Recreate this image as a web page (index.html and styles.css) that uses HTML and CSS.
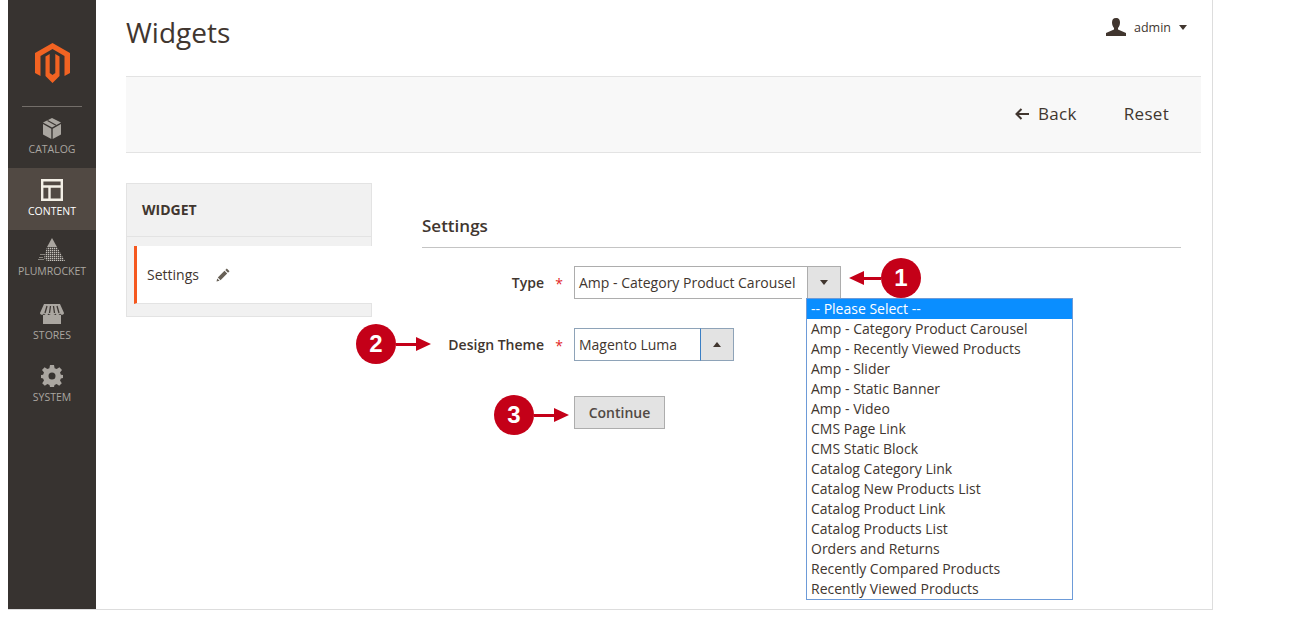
FILE: index.html
```html
<!DOCTYPE html>
<html lang="en">

<head>
    <meta charset="utf-8">
    <title>Widgets</title>
    <link rel="stylesheet" href="styles.css">
</head>

<body>
    <div class="frame">
        <!-- left menu -->
        <nav class="menu">
            <div class="logo">
                <svg width="35" height="40" viewBox="0 0 35 40">
                    <path fill="#f26322" d="M17.5 0L35 10V30L29.5 33V13L17.5 6 5.5 13V33L0 30V10Z" />
                    <path fill="#f26322" d="M14.7 11L10.5 13.5V33L17.5 40 24.5 33V13.5L20.3 11V30L17.5 32 14.7 30Z" />
                </svg>
            </div>
            <a class="menu-item catalog">
                <svg width="20" height="22" viewBox="0 0 20 22">
                    <path fill="#aaa6a0" d="M10 0L19 4.5 10 9.500 1 4.500Z" />
                    <path fill="#aaa6a0" d="M1 6L9.300 10.800V21L1 16.500Z" />
                    <path fill="#aaa6a0" d="M19 6L10.700 10.800V21L19 16.500Z" />
                    <path stroke="#3d3733" stroke-width="1.200" d="M5.500 2.500L14 7.200" />
                </svg>
                <span>Catalog</span>
            </a>
            <a class="menu-item active">
                <svg width="22" height="22" viewBox="0 0 22 22">
                    <path fill="none" stroke="#f3efe6" stroke-width="2.400" d="M1.200 1.200H20.800V20.800H1.200ZM1.200 7.500H20.800M8.500 7.500V20.800" />
                </svg>
                <span>Content</span>
            </a>
            <a class="menu-item plumrocket">
                <svg width="28" height="24" viewBox="0 0 28 24">
                    <defs>
                        <pattern id="dots" width="2" height="2" patternUnits="userSpaceOnUse">
                            <rect width="1.300" height="1.300" fill="#c4c0ba" />
                        </pattern>
                    </defs>
                    <path fill="#aaa6a0" d="M14 0L19 9H9Z" />
                    <path fill="url(#dots)" d="M9 9H19L27 23H9L6 20Z" />
                    <path fill="#aaa6a0" d="M7 16H2V17H7ZM5 19H1V20H5ZM6 21H0V22H6Z" opacity=".7" />
                </svg>
                <span>Plumrocket</span>
            </a>
            <a class="menu-item">
                <svg width="24" height="22" viewBox="0 0 24 22">
                    <path fill="#aaa6a0" d="M3 12H21V21H3Z" />
                    <path fill="#aaa6a0" d="M4 1H20L24 10C24 12 21 12.500 20 10.500 19 12.500 16 12.500 15.500 10.500 14.500 12.500 10 12.500 8.500 10.500 8 12.500 5 12.500 4 10.500 3 12.500 0 12 0 10Z" />
                    <path stroke="#3d3733" stroke-width="1.300" d="M7 3L5 10M10.500 3L9.500 10M13.500 3L14.500 10M17 3L19 10" />
                </svg>
                <span>Stores</span>
            </a>
            <a class="menu-item">
                <svg width="22" height="22" viewBox="0 0 22 22">
                    <path fill="#aaa6a0" fill-rule="evenodd" d="M9 0H13L13.600 3.200 15.700 4.100 18.400 2.200 21 5 19 7.600 19.900 9.700 22 10V13L19.900 13.400 19 15.500 20.800 18.200 18.200 20.800 15.600 19 13.500 19.900 13 22H9L8.500 19.900 6.400 19 3.800 20.800 1.200 18.200 3 15.500 2.100 13.400 0 13V10L2.100 9.700 3 7.600 1 5 3.600 2.200 6.300 4.100 8.400 3.200ZM11 7.500A3.500 3.500 0 1 0 11 14.500 3.500 3.500 0 1 0 11 7.500Z" />
                </svg>
                <span>System</span>
            </a>
        </nav>

        <main class="main">
            <header class="page-head">
                <h1>Widgets</h1>
                <div class="user">
                    <svg width="20" height="18" viewBox="0 0 20 18">
                        <path fill="#41362f" d="M10 0C13 0 14 2 14 4.500 14 7 13 9 12 10V11.500L20 15V18H0V15L8 11.500V10C7 9 6 7 6 4.500 6 2 7 0 10 0Z" />
                    </svg>
                    <span>admin</span>
                    <i class="caret"></i>
                </div>
            </header>

            <div class="actions">
                <a class="action back">
                    <svg width="14" height="12" viewBox="0 0 14 12">
                        <path fill="none" stroke="#41362f" stroke-width="2" d="M14 6H1.500M6.500 1L1.500 6 6.500 11" />
                    </svg>
                    Back
                </a>
                <a class="action">Reset</a>
            </div>

            <div class="columns">
                <!-- tabs -->
                <aside class="tabs">
                    <div class="tabs-title">WIDGET</div>
                    <div class="tab-item">
                        Settings
                        <svg width="14" height="14" viewBox="0 0 14 14">
                            <path fill="#676056" d="M10.800 0.500L13.500 3.200 12 4.700 9.300 2ZM8.500 2.800L11.200 5.500 4.500 12.200 1.800 9.500ZM1.200 10.400L3.600 12.800 0.500 13.500Z" />
                        </svg>
                    </div>
                </aside>

                <!-- form -->
                <section class="form">
                    <h2>Settings</h2>
                    <div class="field">
                        <label>Type</label>
                        <div class="select select-type">
                            <span class="select-value">Amp - Category Product Carousel</span>
                            <span class="select-btn"><i class="caret"></i></span>
                        </div>
                    </div>
                    <div class="field field-theme">
                        <label>Design Theme</label>
                        <div class="select select-theme">
                            <span class="select-value">Magento Luma</span>
                            <span class="select-btn"><i class="caret up"></i></span>
                        </div>
                    </div>
                    <div class="field field-submit">
                        <button class="continue">Continue</button>
                    </div>
                </section>
            </div>
        </main>
    </div>

    <!-- open dropdown -->
    <ul class="dropdown">
        <li class="current">-- Please Select --</li>
        <li>Amp - Category Product Carousel</li>
        <li>Amp - Recently Viewed Products</li>
        <li>Amp - Slider</li>
        <li>Amp - Static Banner</li>
        <li>Amp - Video</li>
        <li>CMS Page Link</li>
        <li>CMS Static Block</li>
        <li>Catalog Category Link</li>
        <li>Catalog New Products List</li>
        <li>Catalog Product Link</li>
        <li>Catalog Products List</li>
        <li>Orders and Returns</li>
        <li>Recently Compared Products</li>
        <li>Recently Viewed Products</li>
    </ul>

    <!-- callouts over the screenshot -->
    <div class="callout callout-1">
        <i class="arrow-left"></i><b class="line"></b><span class="num">1</span>
    </div>
    <div class="callout callout-2">
        <span class="num">2</span><b class="line"></b><i class="arrow-right"></i>
    </div>
    <div class="callout callout-3">
        <span class="num">3</span><b class="line"></b><i class="arrow-right"></i>
    </div>
</body>

</html>
```

FILE: styles.css
```css
/* reset */

body,
h1,
h2,
ul,
li {
    margin: 0;
    padding: 0;
}

ul {
    list-style-type: none;
}

body {
    background: #fff;
    color: #41362f;
    font: 14px/20px "Open Sans", sans-serif;
}

/* frame */

.frame {
    display: flex;
    box-sizing: border-box;
    width: 1205px;
    height: 610px;
    margin-left: 8px;
    border-right: 1px solid #ddd;
    border-bottom: 1px solid #ddd;
}

/* left menu */

.menu {
    flex: none;
    width: 88px;
    background: #373330;
}

.logo {
    display: flex;
    justify-content: center;
    height: 106px;
    padding-top: 43px;
    box-sizing: border-box;
    position: relative;
}

.logo::after {
    content: "";
    position: absolute;
    left: 14px;
    right: 14px;
    bottom: -1px;
    border-bottom: 1px solid #736e69;
}

.menu-item {
    display: flex;
    flex-direction: column;
    align-items: center;
    box-sizing: border-box;
    height: 62px;
    padding-top: 11px;
    color: #aaa6a0;
    font-size: 10.500px;
    line-height: 16px;
    text-transform: uppercase;
}

.menu-item span {
    margin-top: 2px;
}

.menu-item.catalog {
    margin-top: 1px;
    height: 61px;
}

.menu-item.catalog span {
    margin-top: 1px;
}

.menu-item.plumrocket {
    padding-top: 8px;
}

.menu-item.plumrocket span {
    margin-top: 1px;
}

.menu-item.active {
    background: #514943;
    color: #fff;
}

/* main */

.main {
    flex: 1;
    min-width: 0;
    padding: 0 11px 0 30px;
}

.page-head {
    display: flex;
    justify-content: space-between;
    height: 76px;
}

.page-head h1 {
    padding-top: 13px;
    font-size: 28px;
    line-height: 38px;
    font-weight: 400;
}

.user {
    display: flex;
    align-items: center;
    align-self: flex-start;
    height: 18px;
    margin-top: 18px;
    padding-right: 14px;
    font-size: 12.500px;
}

.user span {
    margin: 1px 8px 0 8px;
}

.caret {
    display: inline-block;
    border-left: 4px solid transparent;
    border-right: 4px solid transparent;
    border-top: 5px solid #41362f;
}

.caret.up {
    border-top: 0;
    border-bottom: 5px solid #41362f;
}

.actions {
    display: flex;
    justify-content: flex-end;
    align-items: center;
    gap: 47px;
    box-sizing: border-box;
    height: 77px;
    padding: 0 32px 2px 0;
    background: #f8f8f8;
    border-top: 1px solid #e3e3e3;
    border-bottom: 1px solid #e3e3e3;
    font-size: 17px;
    letter-spacing: 0.300px;
}

.action.back svg {
    margin-right: 4px;
}

.columns {
    display: flex;
    margin-top: 30px;
}

/* tabs */

.tabs {
    flex: none;
    box-sizing: border-box;
    width: 246px;
    height: 134px;
    padding-bottom: 13px;
    background: #f1f1f1;
    border: 1px solid #e3e3e3;
}

.tabs-title {
    box-sizing: border-box;
    height: 53px;
    padding: 16px 15px 0;
    border-bottom: 1px solid #e3e3e3;
    font-weight: 700;
    font-size: 14px;
}

.tab-item {
    display: flex;
    align-items: center;
    gap: 17px;
    box-sizing: border-box;
    height: 58px;
    margin: 9px -1px 0 7px;
    padding-left: 10px;
    background: #fff;
    border-left: 3px solid #f5581f;
    border-bottom: 1px solid #e3e3e3;
}

/* form */

.form {
    flex: 1;
    padding: 32px 20px 0 50px;
}

.form h2 {
    height: 32px;
    border-bottom: 1px solid #c4c4c4;
    font-size: 17px;
    line-height: 22px;
    font-weight: 600;
}

.field {
    display: flex;
    align-items: center;
    margin-top: 18px;
    min-height: 33px;
    padding-left: 152px;
}

.field-theme {
    margin-top: 29px;
}

.field-submit {
    margin-top: 35px;
}

.field label {
    position: relative;
    width: 122px;
    margin-left: -152px;
    margin-right: 30px;
    flex: none;
    text-align: right;
    font-weight: 600;
    white-space: nowrap;
}

.field label::after {
    content: "*";
    position: absolute;
    right: -19px;
    top: 1px;
    color: #e22626;
    font-weight: 400;
}

.select {
    display: flex;
    box-sizing: border-box;
    height: 33px;
    background: #fff;
    border: 1px solid #adadad;
}

.select-type {
    width: 267px;
    border-right: 0;
    border-bottom: 0;
}

.select-type .select-value {
    margin-right: 5px;
    border-bottom: 1px solid #adadad;
}

.select-type .select-btn {
    margin-bottom: 0;
}

.select-theme {
    width: 160px;
    border-color: #8ea3b8;
}

.select-value {
    flex: 1;
    padding: 6px 4px 0;
    white-space: nowrap;
}

.select-btn {
    display: flex;
    flex: none;
    align-items: center;
    justify-content: center;
    width: 34px;
    margin: -1px 0;
    background: #e3e3e3;
    border: 1px solid #adadad;
    box-sizing: border-box;
}

.select-theme .select-btn {
    border-color: #8ea3b8 #8ea3b8 #8ea3b8 #3b7fc4;
    margin-right: -1px;
}

.continue {
    box-sizing: border-box;
    width: 91px;
    height: 33px;
    padding: 0;
    background: #e3e3e3;
    border: 1px solid #adadad;
    color: #514943;
    font: 600 14px/20px "Open Sans", sans-serif;
}

/* dropdown */

.dropdown {
    position: absolute;
    top: 298px;
    left: 806px;
    box-sizing: border-box;
    width: 267px;
    height: 302px;
    background: #fff;
    border: 1px solid #6d9bd8;
}

.dropdown li {
    height: 20px;
    padding-left: 4px;
    line-height: 20px;
}

.dropdown li.current {
    background: #0a8eff;
    color: #fff;
}

/* callouts */

.callout {
    position: absolute;
    display: flex;
    align-items: center;
}

.callout-1 {
    top: 258px;
    left: 849px;
}

.callout-2 {
    top: 324px;
    left: 356px;
}

.callout-3 {
    top: 395px;
    left: 494px;
}

.num {
    flex: none;
    width: 40px;
    height: 40px;
    border-radius: 50%;
    background: #c40018;
    color: #fff;
    text-align: center;
    font: 700 24px/40px "Liberation Sans", sans-serif;
}

.line {
    flex: none;
    width: 20px;
    height: 3px;
    background: #c40018;
}

.callout-1 .line {
    width: 17px;
}

.arrow-left,
.arrow-right {
    flex: none;
    border-top: 7.500px solid transparent;
    border-bottom: 7.500px solid transparent;
}

.arrow-left {
    border-right: 15px solid #c40018;
}

.arrow-right {
    border-left: 15px solid #c40018;
}
```
